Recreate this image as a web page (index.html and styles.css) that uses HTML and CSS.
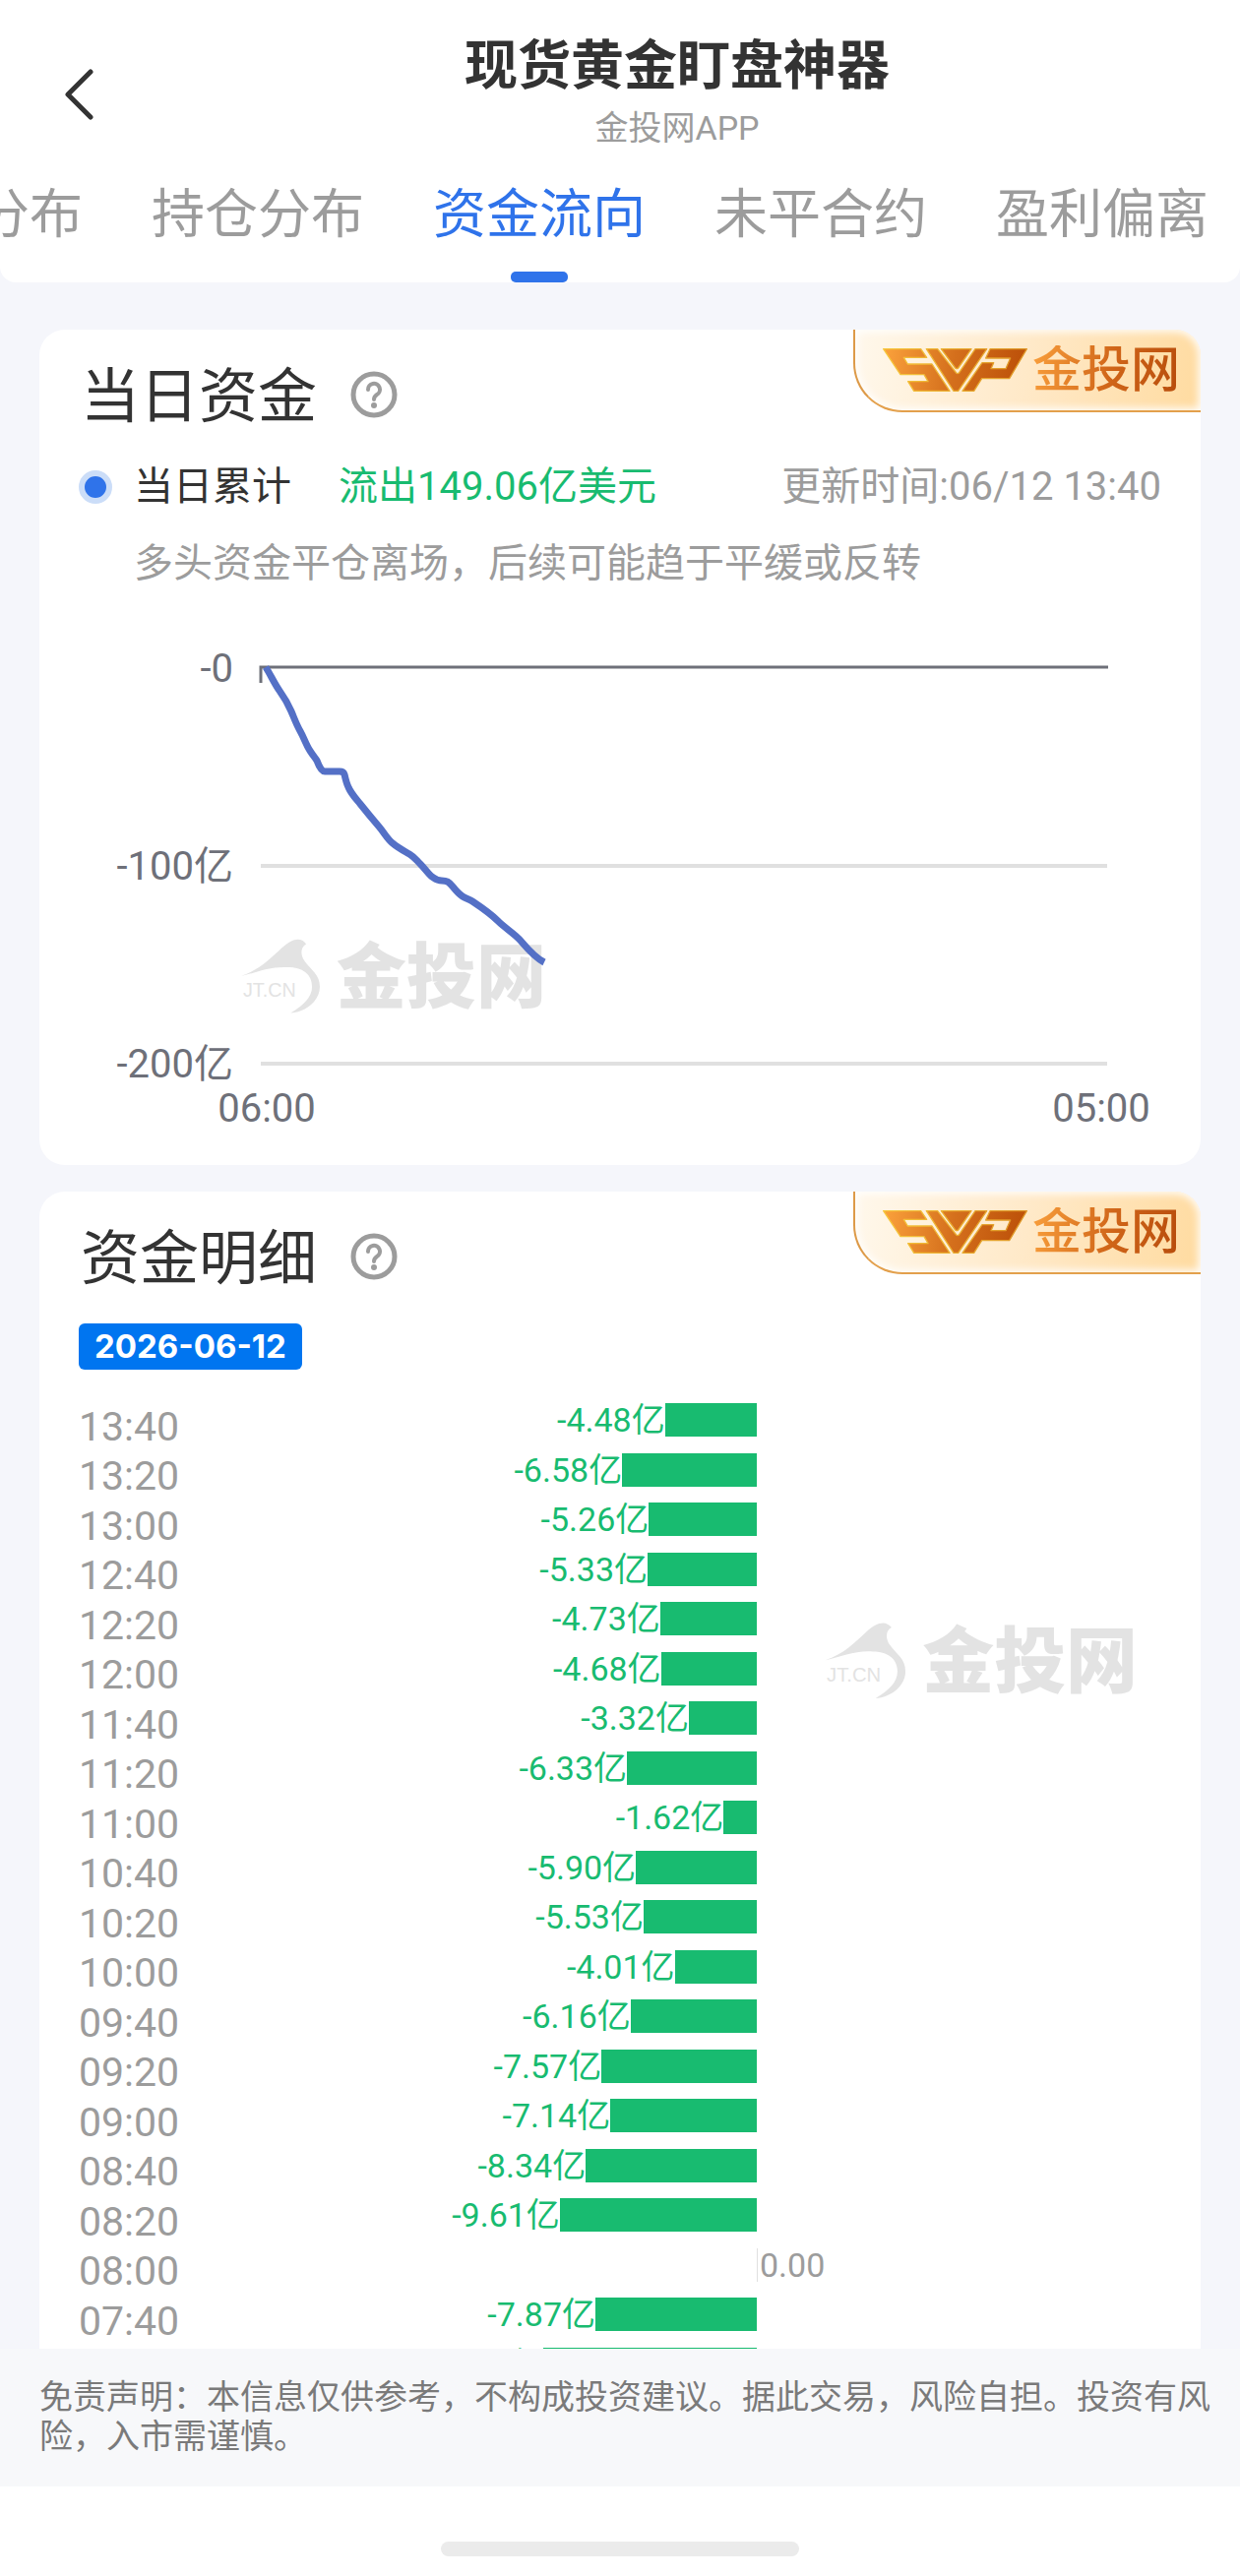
FILE: index.html
```html
<!doctype html>
<html lang="zh">
<head>
<meta charset="utf-8">
<meta name="viewport" content="width=device-width, initial-scale=1">
<title>现货黄金盯盘神器</title>
<link rel="stylesheet" href="styles.css">
</head>
<body>

<!-- 公用图形 -->
<svg class="defs" width="0" height="0" aria-hidden="true">
    <defs>
        <linearGradient id="gold" x1="0" y1="0" x2="441" y2="60" gradientUnits="userSpaceOnUse">
            <stop offset="0" stop-color="#fba23c"/>
            <stop offset="0.5" stop-color="#d46f1c"/>
            <stop offset="1" stop-color="#bb4f08"/>
        </linearGradient>
        <linearGradient id="goldEdge" x1="0" y1="0" x2="441" y2="0" gradientUnits="userSpaceOnUse">
            <stop offset="0" stop-color="#f7c83c"/>
            <stop offset="1" stop-color="#dd9426"/>
        </linearGradient>
    </defs>
    <symbol id="svp" viewBox="-3 -3 447 138">
        <g fill="url(#gold)" stroke="url(#goldEdge)" stroke-width="4" stroke-linejoin="round">
            <path d="M2 2H116L134 28H64L76 48H150L204 130H95L77 101H138L126 80H54Z"/>
            <path d="M133 2H167L224 75Q228 79 233 74L282 2H317L230 130H216Z"/>
            <path d="M178 2H270L230 60Q226 64 221 60Z"/>
            <path d="M327 2H439L386 92H302L278 130H243L303 44H338L330 62H375L389 30H314Z"/>
        </g>
    </symbol>
    <symbol id="help" viewBox="0 0 48 48">
        <g fill="none" stroke="#9c9c9c" stroke-linecap="round">
            <circle cx="24" cy="24" r="21" stroke-width="5"/>
            <path d="M18 19a6 6 0 1 1 9 5q-3 2-3 5" stroke-width="4"/>
        </g>
        <circle cx="24" cy="35" r="3" fill="#9c9c9c"/>
    </symbol>
    <symbol id="watermark" viewBox="0 0 316 80">
        <path d="M0 40C20 33 30 22 42 11C52 2 61 -1 67 7C61 10 61 18 65 24C72 34 81 38 81 51C81 66 66 77 51 78C64 70 73 62 73 51C73 38 63 31 48 31C30 30 17 36 0 40Z"/>
        <text class="mark-en" x="2" y="61">JT.CN</text>
        <text class="mark-cn" x="98" y="66">金投网</text>
    </symbol>
</svg>

<header class="header">
    <div class="bar">
        <button class="back" type="button" aria-label="返回">
            <svg width="32" height="52" viewBox="0 0 32 52"><path d="M28 3L5 26L28 49"/></svg>
        </button>
        <div class="heading">
            <h1>现货黄金盯盘神器</h1>
            <p>金投网APP</p>
        </div>
    </div>
    <nav class="tabs">
        <a href="#">订单分布</a>
        <a href="#">持仓分布</a>
        <a href="#" class="active">资金流向</a>
        <a href="#">未平合约</a>
        <a href="#">盈利偏离</a>
    </nav>
</header>

<main class="main">
    <section class="card">
        <div class="brand">
            <svg width="149" height="46"><use href="#svp"/></svg>
            <span>金投网</span>
        </div>
        <div class="card-title">
            <h2>当日资金</h2>
            <button class="help" type="button" aria-label="说明"><svg width="48" height="48"><use href="#help"/></svg></button>
        </div>
        <div class="status">
            <i class="dot"></i>
            <span>当日累计</span>
            <b>流出149.06亿美元</b>
            <time>更新时间:06/12 13:40</time>
        </div>
        <p class="desc">多头资金平仓离场，后续可能趋于平缓或反转</p>

        <svg class="chart" viewBox="0 0 1100 500">
            <g transform="translate(185 28)">
                <path class="grid" d="M0 202H860M0 403H860"/>
                <path class="axis" d="M0 16V0H861"/>
                <g class="label-y">
                    <text x="-28" y="15">-0</text>
                    <text x="-28" y="216">-100亿</text>
                    <text x="-28" y="417">-200亿</text>
                </g>
                <g class="label-x">
                    <text x="6" y="462">06:00</text>
                    <text x="854" y="462">05:00</text>
                </g>
                <use href="#watermark" x="-20" y="274" width="312" height="80"/>
                <path class="line" d="M5 0C10 8 14 17 19 24S28 38 31 45S36 58 40 65S46 79 50 85S55 92 57 95Q61 106 65 106H80Q84 106 85 109Q87 118 89 122C92 129 97 134 101 139S114 155 120 162S128 174 134 179S146 187 151 190S157 195 162 200S171 211 174 213S179 217 184 217S191 218 195 223S202 231 205 233S212 236 215 238S233 250 241 258S258 271 264 278S278 295 288 300"/>
            </g>
        </svg>
    </section>

    <section class="card">
        <div class="brand">
            <svg width="149" height="46"><use href="#svp"/></svg>
            <span>金投网</span>
        </div>
        <div class="card-title">
            <h2>资金明细</h2>
            <button class="help" type="button" aria-label="说明"><svg width="48" height="48"><use href="#help"/></svg></button>
        </div>
        <time class="date">2026-06-12</time>

        <table class="flow">
            <tr><th>13:40</th><td><div><span>-4.48亿</span><i style="width:22.7%"></i></div></td><td></td></tr>
            <tr><th>13:20</th><td><div><span>-6.58亿</span><i style="width:33.3%"></i></div></td><td></td></tr>
            <tr><th>13:00</th><td><div><span>-5.26亿</span><i style="width:26.7%"></i></div></td><td></td></tr>
            <tr><th>12:40</th><td><div><span>-5.33亿</span><i style="width:27%"></i></div></td><td></td></tr>
            <tr><th>12:20</th><td><div><span>-4.73亿</span><i style="width:23.9%"></i></div></td><td></td></tr>
            <tr><th>12:00</th><td><div><span>-4.68亿</span><i style="width:23.7%"></i></div></td><td></td></tr>
            <tr><th>11:40</th><td><div><span>-3.32亿</span><i style="width:16.8%"></i></div></td><td></td></tr>
            <tr><th>11:20</th><td><div><span>-6.33亿</span><i style="width:32.1%"></i></div></td><td></td></tr>
            <tr><th>11:00</th><td><div><span>-1.62亿</span><i style="width:8.2%"></i></div></td><td></td></tr>
            <tr><th>10:40</th><td><div><span>-5.90亿</span><i style="width:29.9%"></i></div></td><td></td></tr>
            <tr><th>10:20</th><td><div><span>-5.53亿</span><i style="width:28%"></i></div></td><td></td></tr>
            <tr><th>10:00</th><td><div><span>-4.01亿</span><i style="width:20.3%"></i></div></td><td></td></tr>
            <tr><th>09:40</th><td><div><span>-6.16亿</span><i style="width:31.2%"></i></div></td><td></td></tr>
            <tr><th>09:20</th><td><div><span>-7.57亿</span><i style="width:38.4%"></i></div></td><td></td></tr>
            <tr><th>09:00</th><td><div><span>-7.14亿</span><i style="width:36.2%"></i></div></td><td></td></tr>
            <tr><th>08:40</th><td><div><span>-8.34亿</span><i style="width:42.3%"></i></div></td><td></td></tr>
            <tr><th>08:20</th><td><div><span>-9.61亿</span><i style="width:48.7%"></i></div></td><td></td></tr>
            <tr><th>08:00</th><td></td><td><div class="zero">0.00</div></td></tr>
            <tr><th>07:40</th><td><div><span>-7.87亿</span><i style="width:39.9%"></i></div></td><td></td></tr>
            <tr><th>07:20</th><td><div><span>-10.43亿</span><i style="width:52.8%"></i></div></td><td></td></tr>
        </table>
        <svg class="mark-side" width="320" height="81"><use href="#watermark"/></svg>
    </section>
</main>

<footer class="disclaimer">免责声明：本信息仅供参考，不构成投资建议。据此交易，风险自担。投资有风险，入市需谨慎。</footer>
<div class="home"></div>

</body>
</html>
```

FILE: styles.css
```css
*{
    box-sizing: border-box;
}
body{
    display: flex;
    flex-direction: column;
    height: 100vh;
    margin: 0;
    font-family: Roboto, "Noto Sans CJK SC", sans-serif;
    font-size: 40px;
    line-height: 50px;
    color: #333;
    background-color: #f5f6fb;
}
h1,h2,p{
    margin: 0;
    font-weight: normal;
}
i,b{
    font-style: normal;
    font-weight: normal;
}
button{
    padding: 0;
    border: 0;
    background: none;
    cursor: pointer;
}
button svg{
    display: block;
}
.defs{
    position: absolute;
}

/* 顶部 */
.header{
    flex: none;
    overflow: hidden;
    background-color: #fff;
    border-radius: 0 0 16px 16px;
}
.bar{
    display: grid;
    grid-template-columns: 116px 1fr;
    padding-top: 30px;
}
.back{
    padding: 8px 0 0 64px;
}
.back path{
    fill: none;
    stroke: #333;
    stroke-width: 5;
    stroke-linecap: round;
    stroke-linejoin: round;
}
.heading{
    text-align: center;
}
.heading h1{
    font-size: 54px;
    font-weight: bold;
    line-height: 76px;
}
.heading p{
    font-size: 34px;
    line-height: 48px;
    color: #9c9c9c;
}
.tabs{
    display: flex;
    gap: 70px;
    margin: 27px 0 0 -132px;
}
.tabs a{
    flex: none;
    height: 106px;
    font-size: 54px;
    line-height: 76px;
    color: #9c9c9c;
    text-decoration: none;
}
.tabs .active{
    color: #2f73ea;
}
.tabs .active::after{
    content: "";
    display: block;
    width: 58px;
    height: 11px;
    margin: 19px auto 0;
    border-radius: 5px;
    background-color: #2f73ea;
}

/* 卡片 */
.main{
    flex: 1;
    min-height: 0;
    overflow: hidden;
    padding: 48px 40px 0;
}
.card{
    position: relative;
    padding: 28px 40px 34px;
    margin-bottom: 27px;
    border-radius: 26px;
    background-color: #fff;
}
.card-title{
    display: flex;
    align-items: center;
    gap: 34px;
}
.card-title h2{
    padding: 6px 0 0 2px;
    font-size: 60px;
    line-height: 70px;
}
.brand{
    position: absolute;
    top: 0;
    right: 0;
    display: flex;
    align-items: center;
    gap: 4px;
    width: 353px;
    height: 84px;
    padding-left: 27px;
    border-left: 2px solid #dd9a48;
    border-bottom: 2px solid #e3a04c;
    border-radius: 0 26px 0 50px;
    background: linear-gradient(100deg, #fff8ec, #ffe9c8 50%, #ffdba0);
    box-shadow: inset 0 0 8px 2px #fff;
}
.brand span{
    font-size: 50px;
    font-weight: 500;
    color: transparent;
    background: linear-gradient(100deg, #f99f3c, #cf6418 55%, #b74c0c);
    -webkit-background-clip: text;
    background-clip: text;
}
.status{
    display: flex;
    align-items: center;
    margin-top: 31px;
}
.dot{
    width: 34px;
    height: 34px;
    margin-right: 22px;
    border: 6px solid #cbddf8;
    border-radius: 50%;
    background-color: #2f73ea;
}
.status b{
    margin-left: 48px;
    color: #18bb70;
}
.status time{
    margin-left: auto;
    color: #9c9c9c;
}
.desc{
    margin: 28px 0 52px 56px;
    color: #9c9c9c;
}

/* 走势图 */
.chart{
    display: block;
    width: 100%;
}
.chart path{
    fill: none;
}
.chart .axis{
    stroke: #6e7079;
    stroke-width: 3;
}
.chart .grid{
    stroke: #e0e0e0;
    stroke-width: 4;
}
.chart .line{
    stroke: #5470c6;
    stroke-width: 7;
    stroke-linejoin: round;
}
.chart text{
    fill: #6e7079;
}
.label-y{
    text-anchor: end;
}
.label-x{
    text-anchor: middle;
}
#watermark path,#watermark text{
    fill: #e3e3e3;
}
#watermark .mark-en{
    font-family: "Liberation Sans", sans-serif;
    font-size: 20px;
}
#watermark .mark-cn{
    font-size: 72px;
    font-weight: 900;
}
.mark-side{
    position: absolute;
    top: 436px;
    right: 62px;
}

/* 资金明细 */
.date{
    display: block;
    width: fit-content;
    margin: 30px 0 26px;
    padding: 0 16px;
    border-radius: 6px;
    background-color: #0075f0;
    color: #fff;
    font-family: Inter, sans-serif;
    font-size: 33px;
    font-weight: bold;
    line-height: 47px;
}
.flow{
    width: 100%;
    table-layout: fixed;
    border-collapse: collapse;
}
.flow th{
    width: 278px;
    padding: 14px 0 0;
    font-size: 41px;
    font-weight: normal;
    line-height: 36px;
    text-align: left;
    color: #9c9c9c;
}
.flow tr:nth-child(even) th{
    line-height: 37px;
}
.flow td{
    padding: 0;
    vertical-align: middle;
}
.flow div{
    display: flex;
    justify-content: flex-end;
    align-items: center;
    height: 34px;
    font-size: 34px;
    line-height: 34px;
    color: #18bb70;
}
.flow i{
    flex: none;
    height: 34px;
    background-color: #18bb70;
}
.flow .zero{
    justify-content: flex-start;
    padding-left: 2px;
    border-left: 1px solid #e0e0e0;
    color: #9c9c9c;
}

/* 底部 */
.disclaimer{
    flex: none;
    padding: 29px 24px 31px 40px;
    background-color: #f7f8fa;
    color: #7a7a7a;
    font-size: 34px;
    line-height: 40px;
}
.home{
    flex: none;
    padding: 56px 0 20px;
    background-color: #fff;
}
.home::after{
    content: "";
    display: block;
    width: 364px;
    height: 15px;
    margin: 0 auto;
    border-radius: 8px;
    background-color: #ebebeb;
}
```
